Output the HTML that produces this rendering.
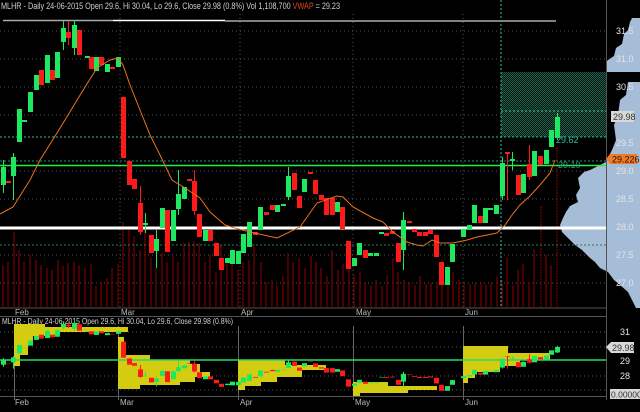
<!DOCTYPE html>
<html><head><meta charset="utf-8"><style>
html,body{margin:0;padding:0;background:#000;}
svg{display:block;font-family:"Liberation Sans",sans-serif;}
.g{fill:#1ee860;stroke:none}
.r{fill:#ff1a1a;stroke:none}
.gl{stroke:#555;stroke-width:1;stroke-dasharray:1,3}
.ax{fill:#e4e4e4;font-size:9px}
.vol line{stroke:#7a0000;stroke-width:1.2}
</style></head><body>
<svg width="640" height="412" viewBox="0 0 640 412" xmlns="http://www.w3.org/2000/svg">
<defs>
<pattern id="hatch" width="2" height="2" patternUnits="userSpaceOnUse">
<rect width="2" height="2" fill="#06170f"/><rect width="1" height="1" fill="#1c5c4a"/><rect x="1" y="1" width="1" height="1" fill="#1c5c4a"/>
</pattern>
<clipPath id="lowclip"><rect x="0" y="317" width="606" height="79"/></clipPath>
<g id="candles">
<g class="g">
<rect x="1" y="167" width="5" height="18"/><rect x="11" y="157" width="5" height="19"/><rect x="17" y="109" width="5" height="33"/><rect x="22" y="120" width="5" height="2"/><rect x="28" y="92" width="5" height="20"/><rect x="34" y="75" width="5" height="15"/><rect x="45" y="55" width="5" height="28"/><rect x="55" y="52" width="5" height="26"/><rect x="61" y="28" width="5" height="14"/><rect x="72" y="25" width="5" height="23"/><rect x="85" y="56" width="5" height="2"/><rect x="94" y="57" width="5" height="14"/><rect x="105" y="64" width="5" height="8"/><rect x="116" y="57" width="5" height="10"/>
<rect x="143" y="223" width="5" height="2"/><rect x="154" y="239" width="5" height="12"/><rect x="160" y="208" width="5" height="20"/><rect x="171" y="210" width="5" height="31"/><rect x="176" y="194" width="5" height="15"/><rect x="182" y="187" width="5" height="12"/><rect x="203" y="230" width="5" height="11"/><rect x="225" y="258" width="5" height="5"/><rect x="230" y="250" width="5" height="14"/><rect x="236" y="251" width="5" height="13"/><rect x="241" y="234" width="5" height="19"/><rect x="247" y="222" width="5" height="25"/>
<rect x="258" y="207" width="5" height="23"/><rect x="275" y="205" width="5" height="7"/><rect x="281" y="204" width="5" height="2"/><rect x="286" y="176" width="5" height="21"/><rect x="302" y="179" width="5" height="13"/><rect x="335" y="202" width="5" height="10"/><rect x="352" y="258" width="5" height="8"/><rect x="357" y="243" width="5" height="12"/><rect x="368" y="253" width="5" height="3"/><rect x="374" y="253" width="5" height="3"/><rect x="379" y="232" width="5" height="2"/><rect x="401" y="220" width="5" height="30"/>
<rect x="445" y="267" width="5" height="18"/><rect x="450" y="244" width="5" height="18"/><rect x="461" y="229" width="5" height="8"/><rect x="467" y="225" width="5" height="5"/><rect x="472" y="205" width="5" height="18"/><rect x="483" y="208" width="5" height="15"/><rect x="488" y="208" width="5" height="2"/><rect x="494" y="205" width="5" height="9"/><rect x="500" y="163" width="5" height="33"/><rect x="510" y="159" width="5" height="2"/><rect x="521" y="174" width="5" height="19"/><rect x="532" y="151" width="5" height="25"/><rect x="544" y="150" width="5" height="14"/><rect x="549" y="130" width="5" height="17"/><rect x="555" y="117" width="5" height="21"/>
</g>
<g class="r">
<rect x="6" y="181" width="5" height="2"/><rect x="39" y="70" width="5" height="15"/><rect x="50" y="70" width="5" height="10"/><rect x="66" y="32" width="5" height="6"/><rect x="77" y="30" width="5" height="25"/><rect x="89" y="57" width="5" height="12"/><rect x="99" y="57" width="5" height="8"/><rect x="110" y="67" width="5" height="2"/><rect x="121" y="97" width="5" height="61"/><rect x="127" y="161" width="5" height="24"/><rect x="132" y="179" width="5" height="10"/><rect x="138" y="203" width="5" height="29"/><rect x="149" y="235" width="5" height="18"/><rect x="165" y="210" width="5" height="42"/><rect x="187" y="179" width="5" height="2"/><rect x="192" y="181" width="5" height="30"/><rect x="197" y="214" width="5" height="23"/><rect x="208" y="230" width="5" height="11"/><rect x="214" y="243" width="5" height="13"/><rect x="219" y="258" width="5" height="12"/>
<rect x="253" y="232" width="5" height="3"/><rect x="264" y="212" width="5" height="3"/><rect x="270" y="205" width="5" height="5"/><rect x="292" y="173" width="5" height="17"/><rect x="297" y="196" width="5" height="12"/><rect x="308" y="172" width="5" height="2"/><rect x="313" y="180" width="5" height="14"/><rect x="319" y="195" width="5" height="5"/><rect x="324" y="198" width="5" height="17"/><rect x="330" y="198" width="5" height="17"/><rect x="340" y="207" width="5" height="22"/><rect x="346" y="241" width="5" height="28"/><rect x="363" y="250" width="5" height="8"/><rect x="384" y="233" width="5" height="3"/><rect x="390" y="231" width="5" height="3"/><rect x="396" y="243" width="5" height="19"/><rect x="407" y="221" width="5" height="2"/><rect x="412" y="229" width="5" height="3"/><rect x="417" y="232" width="5" height="4"/><rect x="423" y="232" width="5" height="4"/><rect x="428" y="230" width="5" height="4"/><rect x="434" y="235" width="5" height="22"/><rect x="439" y="262" width="5" height="23"/>
<rect x="478" y="216" width="5" height="7"/><rect x="505" y="152" width="5" height="2"/><rect x="516" y="175" width="5" height="20"/><rect x="527" y="164" width="5" height="13"/><rect x="538" y="156" width="5" height="9"/>
</g>
<g stroke="#1ee860" stroke-width="1">
<line x1="3.5" y1="160" x2="3.5" y2="193"/><line x1="13.5" y1="153" x2="13.5" y2="200"/><line x1="63.5" y1="21" x2="63.5" y2="50"/><line x1="74.5" y1="20" x2="74.5" y2="55"/><line x1="145.5" y1="213" x2="145.5" y2="233"/><line x1="156.5" y1="230" x2="156.5" y2="268"/><line x1="178.5" y1="170" x2="178.5" y2="215"/><line x1="288.5" y1="167" x2="288.5" y2="200"/><line x1="403.5" y1="212" x2="403.5" y2="270"/><line x1="502.5" y1="157" x2="502.5" y2="200"/><line x1="512.5" y1="152" x2="512.5" y2="170"/><line x1="557.5" y1="113" x2="557.5" y2="140"/>
</g>
<g stroke="#ff1a1a" stroke-width="1">
<line x1="68.5" y1="21" x2="68.5" y2="45"/><line x1="140.5" y1="186" x2="140.5" y2="235"/><line x1="194.5" y1="170" x2="194.5" y2="215"/><line x1="507.5" y1="152" x2="507.5" y2="200"/><line x1="529.5" y1="145" x2="529.5" y2="180"/>
</g>
</g>
</defs>

<g class="gl">
<line x1="0" y1="31" x2="606" y2="31"/><line x1="0" y1="59" x2="606" y2="59"/><line x1="0" y1="87" x2="606" y2="87"/><line x1="0" y1="115" x2="606" y2="115"/><line x1="0" y1="171" x2="606" y2="171"/><line x1="0" y1="199" x2="606" y2="199"/><line x1="0" y1="255" x2="606" y2="255"/><line x1="0" y1="283" x2="606" y2="283"/>
<line x1="120" y1="14" x2="120" y2="307"/><line x1="240" y1="14" x2="240" y2="307"/><line x1="353" y1="14" x2="353" y2="307"/><line x1="463" y1="14" x2="463" y2="307"/>
</g>
<g class="vol">
<line x1="3" y1="265" x2="3" y2="307"/><line x1="8" y1="262" x2="8" y2="307"/><line x1="14" y1="232" x2="14" y2="307"/><line x1="19" y1="250" x2="19" y2="307"/><line x1="24" y1="262" x2="24" y2="307"/><line x1="30" y1="255" x2="30" y2="307"/><line x1="36" y1="260" x2="36" y2="307"/><line x1="41" y1="265" x2="41" y2="307"/><line x1="47" y1="268" x2="47" y2="307"/><line x1="52" y1="270" x2="52" y2="307"/><line x1="58" y1="260" x2="58" y2="307"/><line x1="63" y1="266" x2="63" y2="307"/><line x1="68" y1="263" x2="68" y2="307"/><line x1="74" y1="262" x2="74" y2="307"/><line x1="79" y1="265" x2="79" y2="307"/><line x1="85" y1="268" x2="85" y2="307"/><line x1="91" y1="264" x2="91" y2="307"/><line x1="96" y1="286" x2="96" y2="307"/><line x1="101" y1="282" x2="101" y2="307"/><line x1="107" y1="278" x2="107" y2="307"/><line x1="112" y1="268" x2="112" y2="307"/><line x1="118" y1="264" x2="118" y2="307"/><line x1="123" y1="222" x2="123" y2="307"/><line x1="129" y1="226" x2="129" y2="307"/><line x1="134" y1="236" x2="134" y2="307"/><line x1="140" y1="250" x2="140" y2="307"/><line x1="145" y1="228" x2="145" y2="307"/><line x1="151" y1="258" x2="151" y2="307"/><line x1="156" y1="268" x2="156" y2="307"/><line x1="162" y1="253" x2="162" y2="307"/><line x1="167" y1="262" x2="167" y2="307"/><line x1="173" y1="256" x2="173" y2="307"/><line x1="178" y1="262" x2="178" y2="307"/><line x1="184" y1="243" x2="184" y2="307"/><line x1="189" y1="242" x2="189" y2="307"/><line x1="194" y1="241" x2="194" y2="307"/><line x1="199" y1="243" x2="199" y2="307"/><line x1="205" y1="262" x2="205" y2="307"/><line x1="210" y1="255" x2="210" y2="307"/><line x1="216" y1="272" x2="216" y2="307"/><line x1="221" y1="245" x2="221" y2="307"/><line x1="227" y1="261" x2="227" y2="307"/><line x1="232" y1="262" x2="232" y2="307"/><line x1="238" y1="270" x2="238" y2="307"/><line x1="243" y1="262" x2="243" y2="307"/><line x1="249" y1="260" x2="249" y2="307"/><line x1="254" y1="245" x2="254" y2="307"/><line x1="261" y1="262" x2="261" y2="307"/><line x1="266" y1="282" x2="266" y2="307"/><line x1="272" y1="280" x2="272" y2="307"/><line x1="277" y1="285" x2="277" y2="307"/><line x1="283" y1="276" x2="283" y2="307"/><line x1="288" y1="253" x2="288" y2="307"/><line x1="293" y1="262" x2="293" y2="307"/><line x1="299" y1="258" x2="299" y2="307"/><line x1="305" y1="268" x2="305" y2="307"/><line x1="311" y1="256" x2="311" y2="307"/><line x1="316" y1="262" x2="316" y2="307"/><line x1="321" y1="268" x2="321" y2="307"/><line x1="327" y1="276" x2="327" y2="307"/><line x1="332" y1="250" x2="332" y2="307"/><line x1="338" y1="270" x2="338" y2="307"/><line x1="343" y1="264" x2="343" y2="307"/><line x1="349" y1="250" x2="349" y2="307"/><line x1="354" y1="275" x2="354" y2="307"/><line x1="360" y1="272" x2="360" y2="307"/><line x1="365" y1="282" x2="365" y2="307"/><line x1="371" y1="285" x2="371" y2="307"/><line x1="376" y1="280" x2="376" y2="307"/><line x1="382" y1="286" x2="382" y2="307"/><line x1="387" y1="275" x2="387" y2="307"/><line x1="393" y1="258" x2="393" y2="307"/><line x1="398" y1="272" x2="398" y2="307"/><line x1="404" y1="280" x2="404" y2="307"/><line x1="409" y1="282" x2="409" y2="307"/><line x1="415" y1="285" x2="415" y2="307"/><line x1="420" y1="276" x2="420" y2="307"/><line x1="426" y1="284" x2="426" y2="307"/><line x1="431" y1="283" x2="431" y2="307"/><line x1="437" y1="282" x2="437" y2="307"/><line x1="442" y1="260" x2="442" y2="307"/><line x1="448" y1="265" x2="448" y2="307"/><line x1="453" y1="272" x2="453" y2="307"/><line x1="459" y1="280" x2="459" y2="307"/><line x1="464" y1="282" x2="464" y2="307"/><line x1="470" y1="284" x2="470" y2="307"/><line x1="475" y1="283" x2="475" y2="307"/><line x1="481" y1="283" x2="481" y2="307"/><line x1="486" y1="284" x2="486" y2="307"/><line x1="491" y1="283" x2="491" y2="307"/><line x1="497" y1="276" x2="497" y2="307"/><line x1="502" y1="280" x2="502" y2="307"/><line x1="507" y1="257" x2="507" y2="307"/><line x1="513" y1="285" x2="513" y2="307"/><line x1="518" y1="270" x2="518" y2="307"/><line x1="523" y1="264" x2="523" y2="307"/><line x1="529" y1="282" x2="529" y2="307"/><line x1="534" y1="249" x2="534" y2="307"/><line x1="541" y1="206" x2="541" y2="307" stroke-dasharray="2,1"/><line x1="546" y1="255" x2="546" y2="307"/><line x1="551" y1="265" x2="551" y2="307"/><line x1="557" y1="147" x2="557" y2="307" stroke-dasharray="2,1"/>
</g>
<rect x="501" y="72" width="105" height="65" fill="url(#hatch)"/>
<line x1="501" y1="111" x2="606" y2="111" stroke="#3fbf9a" stroke-dasharray="2,2"/>
<polygon fill="#a6bdd8" points="640,18 632,18 630,22 628,30 624,34 622,44 616,48 614,56 608,60 606,62 606,72 640,72 640,18"/>
<polygon fill="#a6bdd8" points="640,82 628,82 626,95 620,100 618,115 614,125 616,140 612,150 606,162 600,165 590,170 584,172 578,178 580,188 576,195 578,202 570,206 566,212 563,218 560,225 562,232 566,236 575,245 582,250 590,258 595,262 600,268 608,272 614,280 620,285 628,292 632,300 636,308 640,308"/>
<line x1="0" y1="137" x2="606" y2="137" stroke="#2fbf9a" stroke-dasharray="2,2"/>
<line x1="0" y1="161" x2="606" y2="161" stroke="#2a8a8a" stroke-dasharray="2,2"/>
<line x1="0" y1="245" x2="606" y2="245" stroke="#2a7a60" stroke-dasharray="2,2"/>
<line x1="0" y1="165.5" x2="606" y2="165.5" stroke="#22ee44" stroke-width="1.5"/>
<line x1="0" y1="228" x2="606" y2="228" stroke="#fff" stroke-width="3"/>
<line x1="3" y1="20.5" x2="113" y2="20.5" stroke="#aaa" stroke-width="1.5"/>
<line x1="113" y1="20.5" x2="225" y2="20.5" stroke="#fff" stroke-width="1.5"/>
<line x1="225" y1="21" x2="556" y2="21" stroke="#aaa" stroke-width="1.5"/>
<line x1="501" y1="0" x2="501" y2="307" stroke="#2fbf9a" stroke-dasharray="2,2"/>
<use href="#candles"/>
<polyline fill="none" stroke="#e8741e" stroke-width="1" points="0,214 13,207 30,180 40,160 57,133 65,120 85,87 97,68 110,60 118,58 123,65 130,85 140,110 150,135 160,155 172,180 185,188 200,198 210,212 225,225 235,228 250,232 277,238 300,227 317,203 337,196 343,197 353,207 373,218 383,222 393,232 407,242 417,245 423,246 432,240 440,243 453,243 467,240 477,237 497,233 505,225 512,215 520,205 530,196 540,185 550,173 555,160"/>
<text x="556" y="143" fill="#2fbf9a" font-size="9">29.62</text>
<text x="558" y="168" fill="#2a9a80" font-size="9">29.10</text>
<line x1="606.5" y1="0" x2="606.5" y2="400" stroke="#555"/>
<g class="ax">
<text x="616" y="34">31.5</text><text x="616" y="62">31.0</text><text x="616" y="90">30.5</text><text x="616" y="146">29.5</text><text x="616" y="174">29.0</text><text x="616" y="202">28.5</text><text x="616" y="230">28.0</text><text x="616" y="258">27.5</text><text x="616" y="286">27.0</text>
</g>
<rect x="611" y="111" width="23" height="11" fill="#d8d8d8"/>
<text x="613" y="120" fill="#333" font-size="9">29.98</text>
<polygon points="606,159 610,154 637,154 637,164 610,164" fill="#ee7a2a"/>
<text x="612" y="162.5" fill="#2a1000" font-size="9">29.226</text>
<text x="1" y="9" fill="#d0d0d0" font-size="9" textLength="339" lengthAdjust="spacingAndGlyphs">MLHR - Daily 24-06-2015 Open 29.6, Hi 30.04, Lo 29.6, Close 29.98 (0.8%) Vol 1,108,700 <tspan fill="#e04020">VWAP</tspan> = 29.23</text>

<line x1="0" y1="308" x2="606" y2="308" stroke="#555"/>
<line x1="0" y1="316.5" x2="606" y2="316.5" stroke="#555"/>
<g fill="#bbb" font-size="8"><text x="15" y="315">Feb</text><text x="121" y="315">Mar</text><text x="241" y="315">Apr</text><text x="356" y="315">May</text><text x="465" y="315">Jun</text></g>

<text x="2" y="324" fill="#d0d0d0" font-size="8.5" textLength="231" lengthAdjust="spacingAndGlyphs">MLHR - Daily 24-06-2015 Open 29.6, Hi 30.04, Lo 29.6, Close 29.98 (0.8%)</text>
<g class="gl"><line x1="0" y1="332" x2="606" y2="332"/><line x1="0" y1="347" x2="606" y2="347"/><line x1="0" y1="376" x2="606" y2="376"/><line x1="0" y1="390" x2="606" y2="390"/></g>
<g stroke="#666"><line x1="14.5" y1="326" x2="14.5" y2="400"/><line x1="118.5" y1="326" x2="118.5" y2="400"/><line x1="238.5" y1="326" x2="238.5" y2="400"/><line x1="353.5" y1="326" x2="353.5" y2="400"/><line x1="463.5" y1="326" x2="463.5" y2="400"/></g>
<g fill="#d4cc10">
<polygon points="14,324 45,324 45,327 128,327 128,332 60,332 60,336 33,336 33,345 28,345 28,355 20,355 20,366 14,366"/>
<polygon points="118,337 124,337 124,355 150,355 150,360 190,360 190,364 200,364 200,372 210,372 210,377 195,377 195,382 180,382 180,385 140,385 140,389 118,389"/>
<polygon points="238,360 285,360 285,365 326,365 326,370 302,370 302,377 277,377 277,382 261,382 261,386 245,386 245,390 238,390"/>
<polygon points="353,382 388,382 388,386 437,386 437,390 408,390 408,393 360,393 360,396 353,396"/>
<polygon points="463,346 508,346 508,353 550,353 550,360 520,360 520,366 500,366 500,372 475,372 475,378 468,378 468,383 463,383"/>
</g>
<line x1="0" y1="360" x2="606" y2="360" stroke="#22dd66" stroke-width="1.5"/>
<g clip-path="url(#lowclip)"><use href="#candles" transform="translate(0,324.5) scale(1,0.261) translate(0,-31)"/></g>
<line x1="0" y1="396.5" x2="606" y2="396.5" stroke="#555"/>
<g class="ax"><text x="620" y="335">31</text><text x="620" y="364">29</text><text x="620" y="379">28</text></g>
<polygon points="606,347 611,342 634,342 634,353 611,353" fill="#d8d8d8"/>
<text x="612" y="351" fill="#333" font-size="9">29.98</text>
<rect x="610" y="389" width="30" height="10" fill="#d8d8d8"/>
<text x="611" y="397.5" fill="#333" font-size="8.5">0.000000</text>
<g fill="#bbb" font-size="8"><text x="15" y="405">Feb</text><text x="120" y="405">Mar</text><text x="240" y="405">Apr</text><text x="355" y="405">May</text><text x="465" y="405">Jun</text></g>
</svg>
</body></html>
